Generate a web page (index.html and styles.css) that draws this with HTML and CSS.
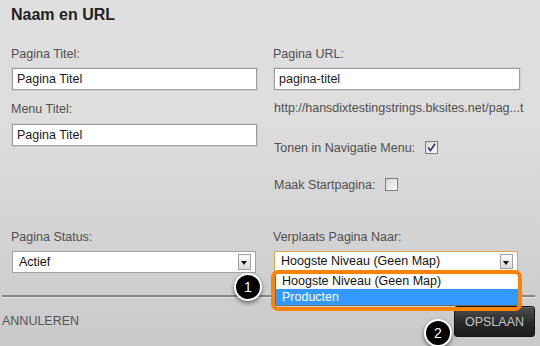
FILE: index.html
```html
<!DOCTYPE html>
<html lang="nl">
<head>
    <meta charset="UTF-8">
    <meta name="viewport" content="width=device-width, initial-scale=1.0">
    <title>Naam en URL</title>
    <link rel="stylesheet" href="styles.css">
</head>
<body>

<div class="panel">
    <h2 class="title">Naam en URL</h2>

    <!-- Titel en URL -->
    <div class="columns">
        <div class="col">
            <label class="label">Pagina Titel:</label>
            <input type="text" class="field" value="Pagina Titel">
            <label class="label label-next">Menu Titel:</label>
            <input type="text" class="field" value="Pagina Titel">
        </div>
        <div class="col">
            <label class="label">Pagina URL:</label>
            <input type="text" class="field" value="pagina-titel">
            <div class="url">http://hansdixtestingstrings.bksites.net/pag...t</div>
            <div class="check-row first">
                Tonen in Navigatie Menu:
                <span class="checkbox">
                    <svg width="11" height="11" viewBox="0 0 11 11"><path d="M2.2 5.4 L4.4 8.6 L9 1.8" fill="none" stroke="#27307f" stroke-width="1.6"/></svg>
                </span>
            </div>
            <div class="check-row second">
                Maak Startpagina:
                <span class="checkbox"></span>
            </div>
        </div>
    </div>

    <!-- Status en map -->
    <div class="columns status">
        <div class="col">
            <label class="label">Pagina Status:</label>
            <div class="select">
                <span>Actief</span>
                <span class="arrow"></span>
            </div>
        </div>
        <div class="col">
            <label class="label">Verplaats Pagina Naar:</label>
            <div class="select-wrap">
                <div class="select focused">
                    <span>Hoogste Niveau (Geen Map)</span>
                    <span class="arrow"></span>
                </div>
                <div class="options">
                    <div class="option">Hoogste Niveau (Geen Map)</div>
                    <div class="option selected">Producten</div>
                </div>
                <div class="highlight"></div>
            </div>
        </div>
    </div>

    <div class="divider"></div>

    <div class="footer">
        <span class="cancel">ANNULEREN</span>
        <button class="save">OPSLAAN</button>
    </div>

    <span class="callout one">1</span>
    <span class="callout two">2</span>
</div>

</body>
</html>
```

FILE: styles.css
```css
body {
    margin: 0;
    font-family: "Liberation Sans", Arial, sans-serif;
}
.panel {
    position: relative;
    width: 540px;
    height: 346px;
    overflow: hidden;
    background: linear-gradient(#dfdfdf 0, #dedede 110px, #cacaca 346px);
}
.title {
    margin: 0;
    padding: 5px 0 0 11px;
    font-size: 16px;
    line-height: 19px;
    font-weight: bold;
    color: #222;
}
.columns {
    display: grid;
    grid-template-columns: 245px 245px;
    column-gap: 17px;
    padding: 23px 0 0 12px;
}
.col {
    display: flex;
    flex-direction: column;
    align-items: flex-start;
}
.label {
    display: block;
    margin-left: -1px;
    margin-bottom: 6px;
    font-size: 12.5px;
    line-height: 15px;
    color: #505050;
}
.label-next {
    margin-top: 12px;
    margin-bottom: 7px;
}
.field {
    box-sizing: border-box;
    width: 245px;
    height: 22px;
    margin: 0;
    padding: 0 4px;
    border: 1px solid #9c9c9c;
    box-shadow: 0 0 0 1px #d0d0d0;
    background: white;
    font-family: inherit;
    font-size: 12.5px;
    color: #1a1a1a;
    outline: none;
}
.col:last-child .field {
    width: 246px;
}
.url {
    margin-top: 11px;
    font-size: 12.5px;
    line-height: 15px;
    color: #505050;
    white-space: nowrap;
}
.check-row {
    display: flex;
    align-items: center;
    gap: 10px;
    height: 15px;
    font-size: 12.5px;
    color: #505050;
}
.check-row.first {
    margin-top: 24px;
}
.check-row.second {
    margin-top: 22px;
}
.checkbox {
    box-sizing: border-box;
    display: flex;
    align-items: center;
    justify-content: center;
    width: 13px;
    height: 13px;
    border: 1px solid #7d7d7d;
    background: linear-gradient(135deg, #d6d6d6, #fbfbfb);
}
.status {
    padding-top: 38px;
}
.select {
    box-sizing: border-box;
    position: relative;
    width: 244px;
    height: 22px;
    padding: 0 6px;
    border: 1px solid #a2a2a2;
    background: white;
    font-size: 12.5px;
    line-height: 20px;
    color: #111;
}
.select.focused {
    height: 21px;
    line-height: 19px;
    border-color: #e3a44a;
}
.arrow {
    box-sizing: border-box;
    position: absolute;
    top: 2px;
    right: 4px;
    width: 13px;
    height: 16px;
    border: 1px solid #a0a0a0;
    background: linear-gradient(#fbfbfb, #dadada);
}
.focused .arrow {
    height: 15px;
}
.arrow::after {
    content: "";
    position: absolute;
    left: 2px;
    top: 6px;
    border-left: 3.5px solid transparent;
    border-right: 3.5px solid transparent;
    border-top: 4px solid #111;
}
.select-wrap {
    position: relative;
}
.options {
    position: absolute;
    top: 22px;
    left: 1px;
    width: 242px;
    background: white;
    border: 1px solid #6f6f6f;
    border-top: none;
}
.option {
    height: 16px;
    padding-left: 6px;
    font-size: 12.5px;
    line-height: 16px;
    color: #111;
}
.option.selected {
    background-color: #3399ff;
    color: white;
}
.highlight {
    position: absolute;
    top: 19px;
    left: -3px;
    width: 251px;
    height: 41px;
    box-sizing: border-box;
    border: 4px solid #ff8300;
    border-radius: 7px;
}
.divider {
    margin: 22px 5px 0 2px;
    border-top: 2px solid #868686;
    border-bottom: 1px solid #e4e4e4;
}
.footer {
    display: flex;
    justify-content: space-between;
    align-items: center;
    margin-top: 8px;
    padding: 0 5px 0 2px;
}
.cancel {
    font-size: 12.5px;
    line-height: 15px;
    color: #555;
}
.save {
    width: 81px;
    height: 31px;
    padding: 0;
    border: 1px solid #141414;
    border-radius: 3px;
    background: linear-gradient(#4f4f4f, #262626 60%, #1c1c1c);
    box-shadow: inset 0 1px 0 rgba(255, 255, 255, 0.15);
    font-family: inherit;
    font-size: 12.5px;
    color: #c4c4c4;
}
.callout {
    position: absolute;
    box-sizing: border-box;
    width: 28px;
    height: 28px;
    border: 2px solid white;
    border-radius: 50%;
    background: black;
    box-shadow: 0 2px 4px rgba(0, 0, 0, 0.5);
    color: white;
    font-size: 14px;
    line-height: 24px;
    text-align: center;
}
.callout.one {
    left: 234px;
    top: 273px;
}
.callout.two {
    left: 424px;
    top: 319px;
}
```
